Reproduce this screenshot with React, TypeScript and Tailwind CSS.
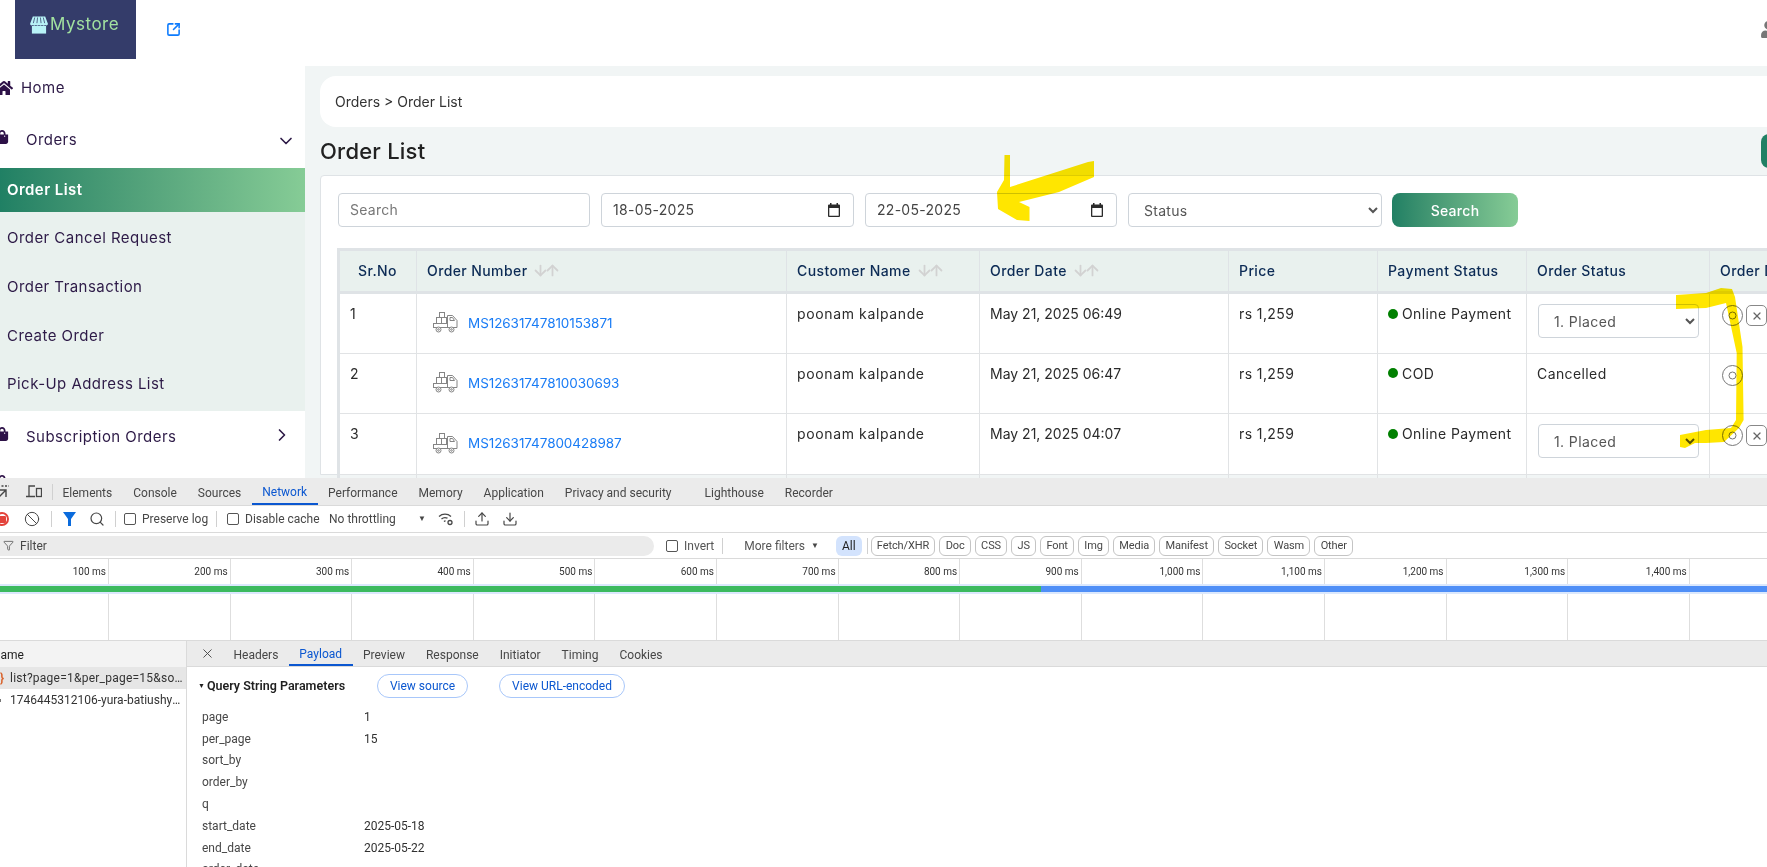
import { ArrowDown, ArrowUp, Ban, ChevronDown, ChevronRight, Download, Funnel, Search, SquareArrowOutUpRight, Upload, X } from 'lucide-react'
import { FaHome, FaShoppingBag, FaUser } from 'react-icons/fa'

const subMenu = ['Order Cancel Request', 'Order Transaction', 'Create Order', 'Pick-Up Address List']

const orders = [
  { sr: 1, number: 'MS12631747810153871', date: 'May 21, 2025 06:49', payment: 'Online Payment', status: 'select' },
  { sr: 2, number: 'MS12631747810030693', date: 'May 21, 2025 06:47', payment: 'COD', status: 'Cancelled' },
  { sr: 3, number: 'MS12631747800428987', date: 'May 21, 2025 04:07', payment: 'Online Payment', status: 'select' },
]

const devTabs = ['Elements', 'Console', 'Sources', 'Network', 'Performance', 'Memory', 'Application', 'Privacy and security']
const chips = ['Fetch/XHR', 'Doc', 'CSS', 'JS', 'Font', 'Img', 'Media', 'Manifest', 'Socket', 'Wasm', 'Other']
const ticks = ['100 ms', '200 ms', '300 ms', '400 ms', '500 ms', '600 ms', '700 ms', '800 ms', '900 ms', '1,000 ms', '1,100 ms', '1,200 ms', '1,300 ms', '1,400 ms', '']
const detailTabs = ['Headers', 'Payload', 'Preview', 'Response', 'Initiator', 'Timing', 'Cookies']
const params = [
  ['page', '1'],
  ['per_page', '15'],
  ['sort_by', ''],
  ['order_by', ''],
  ['q', ''],
  ['start_date', '2025-05-18'],
  ['end_date', '2025-05-22'],
  ['order_date', ''],
]

function SortIcon() {
  return (
    <span className="ml-[5px] inline-flex text-[#d2d2d2]">
      <ArrowDown size={17} strokeWidth={2.5} />
      <ArrowUp size={17} strokeWidth={2.5} className="-ml-[5px]" />
    </span>
  )
}

function TruckIcon() {
  return (
    <svg width="25" height="21" viewBox="0 0 25 21" fill="none" stroke="#858585" strokeWidth="1" className="shrink-0">
      <rect x="6.5" y="0.5" width="5" height="5" />
      <rect x="3.5" y="5.5" width="5" height="6" />
      <rect x="8.5" y="5.5" width="5" height="6" />
      <rect x="0.5" y="11.5" width="14" height="4" />
      <path d="M14.5 3.5h5l4.5 5v7h-9.5z" />
      <path d="M17 5.5h2.5l2 3h-4.5z" />
      <circle cx="5.5" cy="17.5" r="2.5" fill="#fff" />
      <circle cx="5.5" cy="17.5" r="0.8" />
      <circle cx="18.5" cy="17.5" r="2.5" fill="#fff" />
      <circle cx="18.5" cy="17.5" r="0.8" />
    </svg>
  )
}

function CalendarIcon() {
  return (
    <svg width="12" height="14" viewBox="0 0 12 14" className="shrink-0" fill="#2b2b2b">
      <path d="M2 0h1.500v1.500h5V0H10v1.500h1A1 1 0 0 1 12 2.500v10.500a1 1 0 0 1-1 1H1a1 1 0 0 1-1-1V2.500a1 1 0 0 1 1-1h1zM1.300 5v7.700h9.400V5z" />
    </svg>
  )
}

function DateField({ value, width }: { value: string; width: string }) {
  return (
    <div className={`flex h-[34px] shrink-0 items-center justify-between rounded border border-[#ced4da] bg-white pb-[1px] pl-[11px] pr-[13px] text-[14px] tracking-[0.02em] text-[#444] ${width}`}>
      <span>{value}</span>
      <CalendarIcon />
    </div>
  )
}

function EyeIcon() {
  return (
    <svg width="21" height="21" viewBox="0 0 21 21" fill="none" stroke="#777" strokeWidth="1" className="shrink-0">
      <circle cx="10.500" cy="10.500" r="10" />
      <circle cx="10.500" cy="10.500" r="3.500" />
    </svg>
  )
}

function StatusSelect() {
  return (
    <select defaultValue="1. Placed" className="h-[34px] w-[161px] rounded border border-[#ced4da] bg-white pl-[11px] text-[14px] text-[#555]">
      <option>1. Placed</option>
      <option>2. Packed</option>
    </select>
  )
}

function Sidebar() {
  return (
    <nav className="h-full w-[305px] shrink-0 bg-white text-[15px] tracking-[0.03em] text-[#2d1a47]">
      <div className="flex h-[44px] items-center">
        <FaHome size={18} className="-ml-[5px] shrink-0 text-[#2d1147]" />
        <span className="ml-[8px]">Home</span>
      </div>
      <div className="flex h-[58px] items-center justify-between pr-[9px] pt-[3px]">
        <div className="flex items-center">
          <FaShoppingBag size={14} className="-ml-[5px] -mt-[7px] shrink-0 text-[#2d1147]" />
          <span className="ml-[17px]">Orders</span>
        </div>
        <ChevronDown size={20} strokeWidth={2} />
      </div>
      <div className="flex h-[44px] items-center bg-gradient-to-r from-[#208064] to-[#86cc96] pl-[7px] font-semibold text-white">Order List</div>
      <div className="bg-[#e9f1ee] py-[2px] pl-[7px]">
        {subMenu.map((item) => (
          <div key={item} className="flex h-[48.75px] items-center">{item}</div>
        ))}
      </div>
      <div className="flex h-[52px] items-center justify-between pr-[13px]">
        <div className="flex items-center">
          <FaShoppingBag size={14} className="-ml-[5px] -mt-[7px] shrink-0 text-[#2d1147]" />
          <span className="ml-[17px]">Subscription Orders</span>
        </div>
        <ChevronRight size={20} strokeWidth={2} className="-mt-[4px]" />
      </div>
      <div className="flex items-start justify-between pr-[13px] pt-[12px]">
        <FaShoppingBag size={14} className="-ml-[5px] shrink-0 text-[#2d1147]" />
        <ChevronRight size={20} strokeWidth={2} />
      </div>
    </nav>
  )
}

function OrderTable() {
  const head = 'border border-[#dfe3e6] border-b-[3px] border-t-[3px] px-[10px] pb-[2px] text-left text-[14px] font-medium text-[#0c2b55]'
  const cell = 'border border-[#e1e3e5] px-[10px] pt-[9px] align-top text-[14px]'
  return (
    <table className="w-[1531px] table-fixed border-collapse border-l-[3px] border-[#dfe3e6] tracking-[0.025em] text-[#2b2b2b]">
      <colgroup>
        <col className="w-[78px]" />
        <col className="w-[370px]" />
        <col className="w-[193px]" />
        <col className="w-[249px]" />
        <col className="w-[149px]" />
        <col className="w-[149px]" />
        <col className="w-[183px]" />
        <col className="w-[160px]" />
      </colgroup>
      <thead>
        <tr className="h-[43px] bg-[#e9f1ee]">
          <th className={`${head} pl-[18px]`}>Sr.No</th>
          <th className={head}><span className="flex items-center">Order Number<SortIcon /></span></th>
          <th className={head}><span className="flex items-center">Customer Name<SortIcon /></span></th>
          <th className={head}><span className="flex items-center">Order Date<SortIcon /></span></th>
          <th className={head}>Price</th>
          <th className={head}>Payment Status</th>
          <th className={head}>Order Status</th>
          <th className={`${head} whitespace-nowrap`}>Order Details</th>
        </tr>
      </thead>
      <tbody>
        {orders.map((order) => (
          <tr key={order.sr} className="h-[60.5px]">
            <td className={cell}>{order.sr}</td>
            <td className="border border-[#e1e3e5] pl-[16px] align-middle">
              <div className="-mt-[1px] flex items-center gap-[10px]">
                <TruckIcon />
                <a className="text-[13.500px] tracking-[-0.005em] text-[#1a7cf5]">{order.number}</a>
              </div>
            </td>
            <td className={`${cell} tracking-[0.045em]`}>poonam kalpande</td>
            <td className={`${cell} text-[13.500px] tracking-normal`}>{order.date}</td>
            <td className={cell}>rs 1,259</td>
            <td className={cell}>
              <span className="flex items-center whitespace-nowrap">
                <span className="mr-[4px] size-[10px] shrink-0 rounded-full bg-[#008000]" />
                {order.payment}
              </span>
            </td>
            <td className={order.status === 'select' ? 'border border-[#e1e3e5] px-[11px] pt-[10px] align-top' : cell}>
              {order.status === 'select' ? <StatusSelect /> : order.status}
            </td>
            <td className="border border-[#e1e3e5] pl-[12px] pt-[11px] align-top">
              <div className="flex items-center gap-[3px]">
                <EyeIcon />
                {order.status === 'select' && (
                  <span className="flex size-[21px] items-center justify-center rounded-[5px] border border-[#888] text-[#666]">
                    <X size={12} strokeWidth={2.5} />
                  </span>
                )}
              </div>
            </td>
          </tr>
        ))}
        <tr className="h-[10px]">
          {Array.from({ length: 8 }, (_, i) => <td key={i} className="border border-[#e1e3e5]" />)}
        </tr>
      </tbody>
    </table>
  )
}

function StorePage() {
  return (
    <div className="flex h-[478px] shrink-0 flex-col overflow-hidden font-['Inter',sans-serif]">
      <header className="flex h-[66px] shrink-0 items-start justify-between bg-white pl-[15px]">
        <div className="flex items-start">
          <div className="flex h-[59px] w-[121px] items-start gap-[2px] bg-[#343c6a] pl-[15px] pt-[13px]">
            <svg width="18" height="20" viewBox="0 0 19 20" className="mt-[3px] shrink-0">
              <path d="M3 0h13l3 8a2 2 0 0 1-3 1 2.500 2.500 0 0 1-3.300 0 2.500 2.500 0 0 1-3.200 0 2.500 2.500 0 0 1-3.200 0 2.500 2.500 0 0 1-3.300 0 2 2 0 0 1-3-1z" fill="#b8f3f7" />
              <path d="M5 1 3.500 7M8 1l-.7 6M11 1l.7 6M14 1l1.500 6" stroke="#343c6a" strokeWidth="0.8" />
              <rect x="2" y="10" width="15" height="8" fill="#b8f3f7" />
            </svg>
            <span className="text-[17px] font-normal leading-[22px] tracking-[0.03em] text-[#a2e2a0]">Mystore</span>
          </div>
          <SquareArrowOutUpRight size={15} strokeWidth={2.5} className="ml-[30px] mt-[22px] text-[#0d7bfd]" />
        </div>
        <FaUser size={17} className="-mr-[10px] mt-[21px] shrink-0 text-[#777]" />
      </header>
      <div className="flex min-h-0 flex-1">
        <Sidebar />
        <main className="h-full w-[1577px] shrink-0 bg-[#f1f5f5] pl-[15px] pt-[10px]">
          <div className="flex h-[51px] items-center rounded-2xl bg-white pl-[15px] text-[14px] text-[#333]">Orders &gt; Order List</div>
          <div className="flex h-[48px] items-center justify-between">
            <h1 className="text-[22px] font-medium tracking-[0.01em] text-[#212121]">Order List</h1>
            <div className="h-[34px] w-[121px] rounded-lg bg-[#208064]" />
          </div>
          <section className="h-[300px] rounded-t border border-[#dfe3e6] bg-white pl-[17px] pt-[17px]">
            <div className="flex items-center gap-[11px]">
              <input placeholder="Search" className="h-[34px] w-[252px] shrink-0 rounded border border-[#ced4da] bg-white px-[11px] pb-[1px] text-[14px] tracking-[0.02em] placeholder:text-[#777]" />
              <DateField value="18-05-2025" width="w-[253px]" />
              <DateField value="22-05-2025" width="w-[252px]" />
              <select defaultValue="Status" className="h-[34px] w-[254px] shrink-0 rounded border border-[#ced4da] bg-white pl-[11px] text-[14px] tracking-[0.02em] text-[#555]">
                <option>Status</option>
                <option>Placed</option>
              </select>
              <button className="-ml-[1px] h-[34px] w-[126px] shrink-0 rounded-lg bg-gradient-to-r from-[#208064] to-[#86cc96] text-[14px] font-medium tracking-[0.02em] text-white">Search</button>
            </div>
            <div className="-ml-[1px] mt-[21px]">
              <OrderTable />
            </div>
          </section>
        </main>
      </div>
    </div>
  )
}

function DevToolbar() {
  return (
    <div className="flex h-[27px] shrink-0 items-center border-b border-[#dadada] bg-white whitespace-nowrap text-[#474747]">
      <span className="-ml-[5px] flex size-[14px] shrink-0 items-center justify-center rounded-full border-2 border-[#e3423a]">
        <span className="size-[7px] rounded-[1px] bg-[#e3423a]" />
      </span>
      <Ban size={16} strokeWidth={1.5} className="ml-[15px] shrink-0" />
      <span className="ml-[11px] h-[16px] w-px bg-[#d0d0d0]" />
      <svg width="13" height="14" viewBox="0 0 13 14" className="ml-[11px] shrink-0">
        <path d="M0 0h13L8 7v7H5V7z" fill="#0b6bdc" />
      </svg>
      <Search size={16} strokeWidth={1.8} className="ml-[13px] shrink-0" />
      <span className="ml-[10px] h-[16px] w-px bg-[#d0d0d0]" />
      <span className="ml-[8px] size-[12px] shrink-0 rounded-[2px] border border-[#555]" />
      <span className="ml-[6px] w-[65px]">Preserve log</span>
      <span className="ml-[9px] h-[16px] w-px bg-[#d0d0d0]" />
      <span className="ml-[10px] size-[12px] shrink-0 rounded-[2px] border border-[#555]" />
      <span className="ml-[6px] w-[72px]">Disable cache</span>
      <span className="ml-[12px] w-[70px]">No throttling</span>
      <span className="ml-[19px] text-[8px]">▼</span>
      <svg width="16" height="14" viewBox="0 0 16 14" fill="none" stroke="#474747" strokeWidth="1.300" className="ml-[12px] shrink-0">
        <path d="M1 4.500a9 9 0 0 1 12 0M3.500 7a5.500 5.500 0 0 1 6 -.8M6 9.500a2 2 0 0 1 1.500 -.5" />
        <circle cx="12" cy="10.500" r="2" />
      </svg>
      <span className="ml-[10px] h-[16px] w-px bg-[#d0d0d0]" />
      <Upload size={16} strokeWidth={1.8} className="ml-[9px] shrink-0" />
      <Download size={16} strokeWidth={1.8} className="ml-[12px] shrink-0" />
    </div>
  )
}

function FilterBar() {
  return (
    <div className="flex h-[26px] shrink-0 items-center border-b border-[#dadada] bg-white text-[#474747]">
      <div className="flex h-[20px] w-[654px] shrink-0 items-center rounded-r-full bg-[#ebebeb] pl-[3px]">
        <Funnel size={11} strokeWidth={1.6} />
        <span className="ml-[6px]">Filter</span>
      </div>
      <span className="ml-[12px] size-[12px] shrink-0 rounded-[2px] border border-[#555]" />
      <span className="ml-[6px] text-[#555]">Invert</span>
      <span className="ml-[8px] h-[16px] w-px bg-[#d0d0d0]" />
      <span className="ml-[21px] text-[#555]">More filters</span>
      <span className="ml-[6px] text-[8px]">▼</span>
      <span className="ml-[17px] flex h-[20px] items-center rounded-md bg-[#d3e3fd] px-[6px] text-[#1f1f1f]">All</span>
      <span className="ml-[5px] h-[16px] w-px bg-[#d0d0d0]" />
      <div className="ml-[3px] flex gap-[4px] text-[11px] tracking-[-0.01em]">
        {chips.map((chip) => (
          <span key={chip} className="flex h-[20px] items-center rounded-md border border-[#c4c4c4] px-[5.250px] pt-[1px]">{chip}</span>
        ))}
      </div>
    </div>
  )
}

function Timeline() {
  return (
    <div className="h-[82px] shrink-0 border-b border-[#dadada] bg-white">
      <div className="flex h-[25px] text-[#333]">
        {ticks.map((tick, i) => (
          <div key={i} className={`flex shrink-0 items-center justify-end border-r border-[#dedede] pr-[2px] text-[10px] ${i === 0 ? 'w-[109px]' : 'w-[121.600px]'}`}>{tick}</div>
        ))}
      </div>
      <div className="flex h-[10px] items-center bg-[#dbe8fd]">
        <div className="h-[6px] w-[1041px] bg-[#3cba5f]" />
        <div className="h-[6px] flex-1 bg-[#4f8ff7]" />
      </div>
      <div className="flex h-[46px]">
        {ticks.map((tick, i) => (
          <div key={i} className={`shrink-0 border-r border-[#dedede] ${i === 0 ? 'w-[109px]' : 'w-[121.600px]'}`} />
        ))}
      </div>
    </div>
  )
}

function RequestDetails() {
  return (
    <div className="flex min-h-0 flex-1 overflow-hidden bg-white">
      <div className="w-[187px] shrink-0 border-r border-[#dadada] text-[#333]">
        <div className="flex h-[26px] items-center overflow-hidden bg-[#f3f3f3] pt-[2px]">
          <span className="-ml-[8px] text-[#1f1f1f]">Name</span>
        </div>
        <div className="flex h-[22px] items-center bg-[#e6e6e6]">
          <span className="w-[10px] shrink-0 font-bold leading-none text-[#d9622b]">{'}'}</span>
          <span className="truncate tracking-[0.02em]">list?page=1&amp;per_page=15&amp;sort_by=</span>
        </div>
        <div className="flex h-[22px] items-center">
          <span className="-ml-[2px] mr-[9px] size-[3px] shrink-0 bg-[#777]" />
          <span className="truncate">1746445312106-yura-batiushyn-unsplash</span>
        </div>
      </div>
      <div className="min-w-0 flex-1">
        <div className="flex h-[26px] items-stretch border-b border-[#dadada] bg-[#ebebeb] text-[#474747]">
          <span className="ml-[13px] flex items-center"><X size={15} strokeWidth={1.5} /></span>
          <div className="ml-[8px] flex pt-[2px]">
            {detailTabs.map((tab) => (
              <span key={tab} className={`flex items-center px-[10.500px] ${tab === 'Payload' ? 'border-b-2 border-[#0b57d0] text-[#0b57d0]' : ''}`}>{tab}</span>
            ))}
          </div>
        </div>
        <div className="flex h-[38px] items-center pl-[11px] text-[#1f1f1f]">
          <span className="text-[7px]">▼</span>
          <span className="ml-[2px] w-[140px] whitespace-nowrap text-[12.500px] font-semibold">Query String Parameters</span>
          <span className="ml-[30px] flex h-[24px] items-center rounded-full border border-[#a8c7fa] px-[12px] text-[12px] text-[#0b57d0]">View source</span>
          <span className="ml-[31px] flex h-[24px] items-center rounded-full border border-[#a8c7fa] px-[12px] text-[12px] text-[#0b57d0]">View URL-encoded</span>
        </div>
        <div className="pl-[15px] pt-[1px]">
          {params.map(([name, value]) => (
            <div key={name} className="flex h-[21.800px] items-center text-[#303030]">
              <span className="w-[162px] shrink-0 text-[#474747]">{name}</span>
              <span>{value}</span>
            </div>
          ))}
        </div>
      </div>
    </div>
  )
}

function DevTools() {
  return (
    <div className="flex min-h-0 flex-1 flex-col font-['Roboto',sans-serif] text-[12px]">
      <div className="flex h-[28px] shrink-0 items-stretch border-b border-[#dadada] bg-[#ebebeb] text-[#474747]">
        <svg width="14" height="14" viewBox="0 0 14 14" fill="none" stroke="#474747" strokeWidth="1.400" className="-ml-[3px] mt-[7px] shrink-0">
          <path d="M1 1h11" strokeDasharray="2 1.500" />
          <path d="M2 5h7v7M9 5 2 12" />
        </svg>
        <svg width="16" height="14" viewBox="0 0 16 14" fill="none" stroke="#474747" strokeWidth="1.300" className="ml-[15px] mt-[7px] shrink-0">
          <path d="M3 11V1h6M0 11.500h9" />
          <rect x="10.500" y="3.500" width="5" height="8" />
        </svg>
        <span className="ml-[10px] mt-[6px] h-[16px] w-px bg-[#d0d0d0]" />
        <div className="-ml-[1px] flex pt-[3px]">
          {devTabs.map((tab) => (
            <span key={tab} className={`flex items-center px-[10.500px] ${tab === 'Network' ? 'border-b-2 border-[#0b57d0] text-[#0b57d0]' : ''}`}>{tab}</span>
          ))}
          <span className="ml-[12px] flex items-center px-[10.500px]">Lighthouse</span>
          <span className="flex items-center px-[10.500px]">Recorder</span>
        </div>
      </div>
      <DevToolbar />
      <FilterBar />
      <Timeline />
      <RequestDetails />
    </div>
  )
}

export default function App() {
  return (
    <div className="relative flex h-[867px] w-[1767px] flex-col overflow-hidden bg-white">
      <StorePage />
      <DevTools />
      {/* yellow marker strokes drawn over the screenshot */}
      <svg width="1767" height="867" className="pointer-events-none absolute inset-0 mix-blend-multiply">
        <path d="M1004.500 155L1010 155L1010 187L1088 162L1094 161L1094 177L1059 192L1019 202L1029.500 207L1029.500 221L1017 220L998 209L997 192L1004 180Z" fill="#ffe600" />
        <path d="M1676 295L1706 293L1721 288L1732 289L1735 297L1742.500 347L1743.600 420L1739 428L1724 442L1706 443L1695 443L1685 448L1680 447L1680 435L1706 430L1731 428L1736 420L1736.700 353L1726 303L1706 308L1676 309Z" fill="#ffe600" />
      </svg>
    </div>
  )
}
